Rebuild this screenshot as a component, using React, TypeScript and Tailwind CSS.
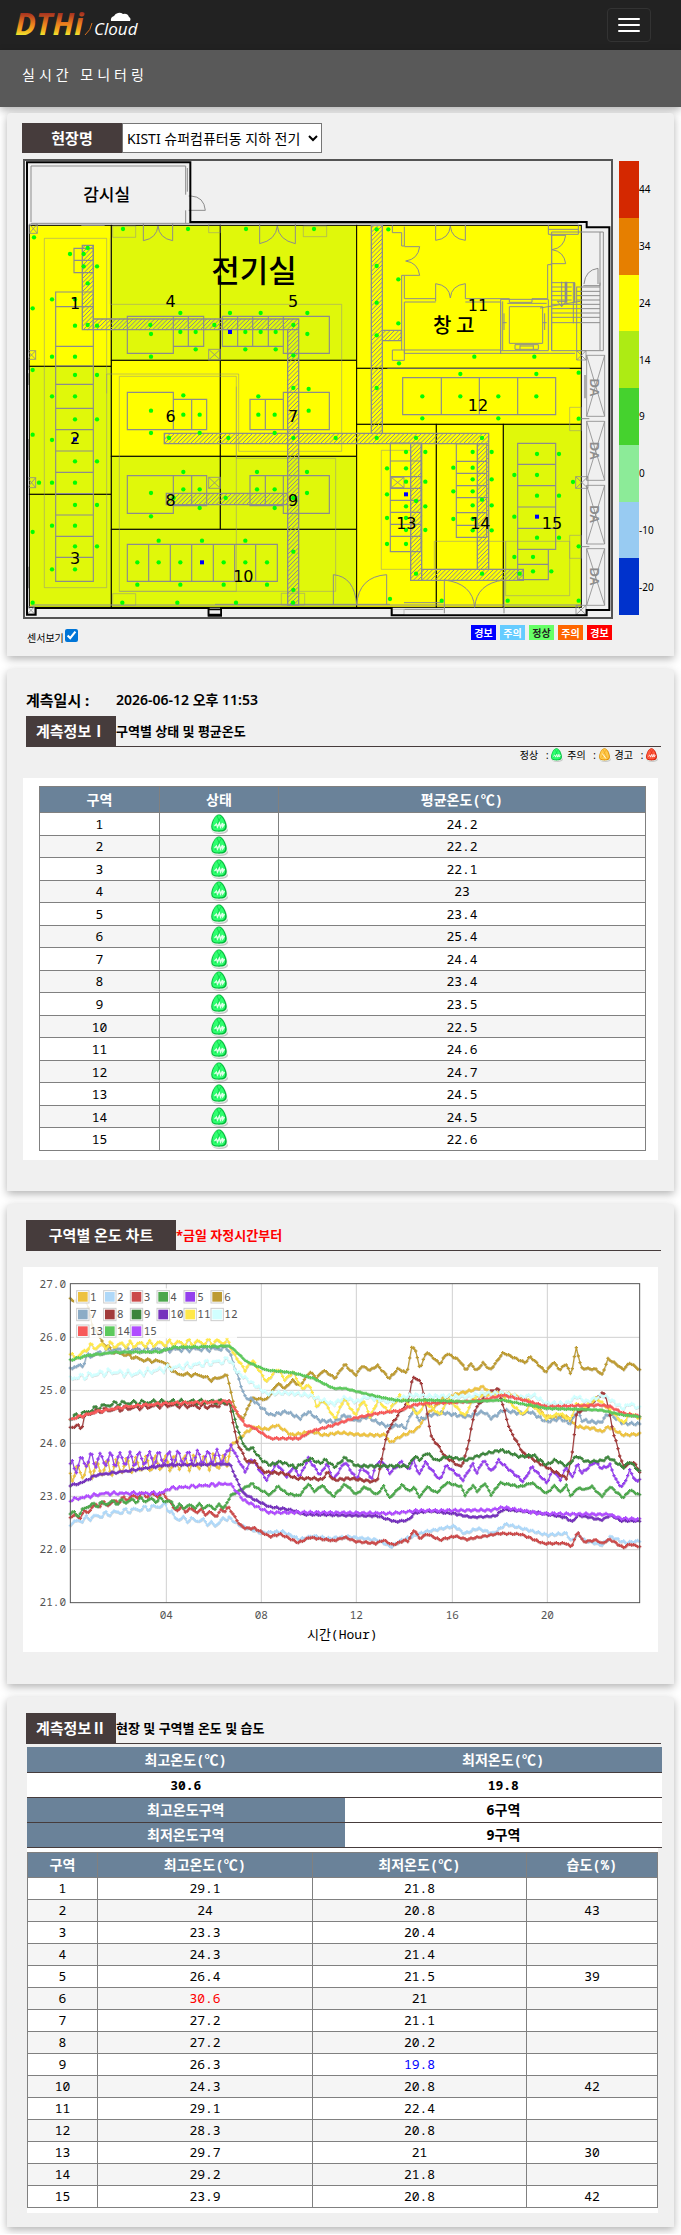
import React from "react";

const SANS = "font-['Noto_Sans','Noto_Sans_CJK_KR',sans-serif]";
const MONO = "font-['Noto_Sans_Mono','Noto_Sans_CJK_KR',monospace]";

type Box = [number, number, number, number];
type Pt = [number, number];

/* ---------- data ---------- */

const ZONES: { id: number; avg: string; max: string; min: string; hum: string }[] = [
  { id: 1, avg: "24.2", max: "29.1", min: "21.8", hum: "" },
  { id: 2, avg: "22.2", max: "24", min: "20.8", hum: "43" },
  { id: 3, avg: "22.1", max: "23.3", min: "20.4", hum: "" },
  { id: 4, avg: "23", max: "24.3", min: "21.4", hum: "" },
  { id: 5, avg: "23.4", max: "26.4", min: "21.5", hum: "39" },
  { id: 6, avg: "25.4", max: "30.6", min: "21", hum: "" },
  { id: 7, avg: "24.4", max: "27.2", min: "21.1", hum: "" },
  { id: 8, avg: "23.4", max: "27.2", min: "20.2", hum: "" },
  { id: 9, avg: "23.5", max: "26.3", min: "19.8", hum: "" },
  { id: 10, avg: "22.5", max: "24.3", min: "20.8", hum: "42" },
  { id: 11, avg: "24.6", max: "29.1", min: "22.4", hum: "" },
  { id: 12, avg: "24.7", max: "28.3", min: "20.8", hum: "" },
  { id: 13, avg: "24.5", max: "29.7", min: "21", hum: "30" },
  { id: 14, avg: "24.5", max: "29.2", min: "21.8", hum: "" },
  { id: 15, avg: "22.6", max: "23.9", min: "20.8", hum: "42" },
];

const SCALE = [
  { label: "44", cls: "bg-[#d42800]" },
  { label: "34", cls: "bg-[#e67f00]" },
  { label: "24", cls: "bg-[#ffff00]" },
  { label: "14", cls: "bg-[#adeb14]" },
  { label: "9", cls: "bg-[#45d22e]" },
  { label: "0", cls: "bg-[#8ceb98]" },
  { label: "-10", cls: "bg-[#98cbf2]" },
  { label: "-20", cls: "bg-[#0032cc]" },
];

const BADGES = [
  { label: "경보", cls: "bg-[#0000ff] text-white" },
  { label: "주의", cls: "bg-[#66ccff] text-white" },
  { label: "정상", cls: "bg-[#66ff66] text-[#222]" },
  { label: "주의", cls: "bg-[#ff6600] text-white" },
  { label: "경보", cls: "bg-[#ff0000] text-white" },
];

/* ---------- floor plan ---------- */

const YELLOW = "#ffff00";
const LIME = "#e0f80a";

const ROOMS: { b: Box; c: string }[] = [
  { b: [88, 256, 334, 679], c: YELLOW },
  { b: [88, 679, 334, 1063], c: LIME },
  { b: [88, 1063, 334, 1402], c: LIME },
  { b: [334, 256, 661, 661], c: LIME },
  { b: [661, 256, 1070, 661], c: LIME },
  { b: [334, 661, 661, 949], c: YELLOW },
  { b: [661, 661, 1070, 949], c: YELLOW },
  { b: [334, 949, 661, 1168], c: LIME },
  { b: [661, 949, 1070, 1168], c: LIME },
  { b: [334, 1168, 1070, 1402], c: LIME },
  { b: [1070, 256, 1744, 685], c: YELLOW },
  { b: [1070, 685, 1744, 853], c: YELLOW },
  { b: [1070, 853, 1309, 1402], c: YELLOW },
  { b: [1309, 853, 1510, 1402], c: YELLOW },
  { b: [1510, 853, 1744, 1402], c: LIME },
];

const CABINETS: Box[] = [
  [222, 325, 280, 361], [222, 361, 280, 398], [167, 456, 280, 500], [167, 500, 280, 619],
  [167, 619, 280, 678], [167, 678, 280, 733], [167, 733, 280, 805], [167, 805, 280, 869],
  [167, 869, 280, 933], [167, 933, 280, 997], [167, 997, 280, 1061], [167, 1061, 280, 1125],
  [167, 1125, 280, 1189], [167, 1189, 280, 1252], [167, 1252, 280, 1324],
  [382, 529, 520, 640], [520, 529, 565, 619], [565, 529, 611, 619], [667, 529, 713, 619],
  [713, 529, 758, 619], [758, 529, 805, 619], [805, 529, 850, 619], [850, 529, 988, 640],
  [382, 757, 520, 869], [520, 778, 575, 869], [575, 778, 620, 869], [750, 778, 796, 869],
  [796, 778, 850, 869], [850, 757, 988, 869],
  [382, 1007, 520, 1120], [520, 1007, 575, 1097], [575, 1007, 620, 1097], [750, 1007, 796, 1097],
  [796, 1007, 850, 1097], [850, 1007, 988, 1120],
  [382, 1213, 446, 1324], [446, 1213, 511, 1324], [511, 1213, 575, 1324], [575, 1213, 640, 1324],
  [640, 1213, 704, 1324], [704, 1213, 767, 1324], [767, 1213, 832, 1324],
  [1208, 713, 1324, 824], [1324, 713, 1438, 824], [1438, 713, 1553, 824], [1553, 713, 1667, 824],
  [1171, 909, 1263, 963], [1171, 963, 1263, 1010], [1171, 1010, 1263, 1045], [1171, 1045, 1263, 1081],
  [1171, 1081, 1263, 1117], [1171, 1117, 1263, 1153], [1171, 1153, 1263, 1189], [1171, 1189, 1263, 1235],
  [1369, 911, 1460, 964], [1369, 964, 1460, 1000], [1369, 1000, 1460, 1037], [1369, 1037, 1460, 1073],
  [1369, 1073, 1460, 1118], [1369, 1118, 1460, 1156], [1369, 1156, 1460, 1192],
  [1553, 910, 1667, 973], [1553, 973, 1667, 1037], [1553, 1037, 1667, 1101], [1553, 1101, 1667, 1165],
  [1553, 1165, 1667, 1228], [1553, 1228, 1645, 1273], [1553, 1273, 1645, 1319],
];

const THIN_BOXES: Box[] = [
  [133, 295, 320, 1343], [338, 258, 407, 292], [910, 258, 980, 290], [626, 252, 661, 278],
  [358, 709, 709, 1354], [338, 1361, 407, 1396], [844, 1360, 914, 1395],
  [1162, 685, 1709, 685], [1144, 931, 1232, 1288], [1303, 1204, 1517, 1288], [1517, 1204, 1709, 1367],
  [1709, 802, 1744, 872], [1709, 1186, 1744, 1255], [1177, 1408, 1212, 1424],
];

const CROSSES: Box[] = [
  [88, 252, 112, 280], [82, 632, 107, 658], [82, 1013, 107, 1043], [82, 1400, 104, 1422],
  [626, 628, 661, 660], [626, 1012, 661, 1045], [1174, 1012, 1212, 1043], [1727, 1010, 1764, 1045],
  [1730, 632, 1758, 660], [1728, 1396, 1758, 1424],
];

const DUCTS: Box[] = [
  [247, 316, 280, 569], [280, 537, 896, 569], [863, 569, 896, 1395], [493, 880, 1466, 911],
  [1114, 256, 1147, 880], [1147, 571, 1204, 602], [499, 1060, 863, 1094],
  [1232, 911, 1265, 1321], [1432, 911, 1466, 1288], [1265, 1288, 1570, 1321],
];

const SHAFTS: Box[] = [
  [1760, 646, 1814, 829], [1760, 844, 1814, 1021], [1760, 1036, 1814, 1212], [1760, 1226, 1814, 1396],
];

const SENSORS: Pt[] = [
  [369, 267], [564, 267], [738, 267], [942, 267], [102, 292], [263, 324], [251, 342], [210, 342],
  [251, 379], [291, 379], [263, 430], [156, 478], [225, 478], [98, 505], [225, 557], [263, 555], [291, 557],
  [156, 650], [225, 650], [98, 690], [225, 705], [291, 705], [156, 769], [225, 769],
  [541, 519], [690, 519], [782, 519], [922, 519], [451, 555], [643, 555], [880, 555],
  [453, 582], [541, 576], [587, 576], [736, 576], [782, 576], [827, 576], [922, 582],
  [587, 628], [736, 628], [827, 628], [453, 650], [880, 646], [880, 744], [926, 747], [550, 766], [775, 769],
  [1130, 268], [1165, 268], [1130, 378], [1195, 418], [1130, 488], [1195, 550], [1130, 586], [1197, 670],
  [1423, 650], [1603, 650], [1381, 702], [1609, 702], [1736, 698], [1130, 744], [1267, 769], [1381, 769],
  [1495, 769], [1609, 769],
  [225, 838], [291, 838], [98, 884], [156, 900], [225, 964], [291, 964], [117, 1028], [156, 1028], [225, 1028],
  [225, 1095], [291, 1095], [156, 1157], [225, 1157], [98, 1176], [225, 1219], [291, 1219], [156, 1288],
  [225, 1288], [98, 1388], [367, 1388], [532, 1388], [708, 1388], [879, 1388],
  [453, 812], [550, 824], [599, 824], [775, 824], [824, 824], [926, 812], [453, 879], [599, 879], [824, 879],
  [507, 894], [685, 894], [880, 894], [1007, 894], [550, 996], [771, 996], [921, 996],
  [550, 1048], [599, 1048], [771, 1048], [824, 1048], [453, 1059], [921, 1059], [521, 1074], [677, 1074], [880, 1074],
  [599, 1104], [824, 1104], [453, 1129], [476, 1202], [606, 1202], [736, 1202], [880, 1235],
  [412, 1267], [476, 1267], [541, 1267], [671, 1267], [736, 1267], [801, 1267],
  [412, 1334], [541, 1334], [671, 1334], [801, 1334], [880, 1350],
  [1267, 835], [1495, 835], [1736, 836], [1130, 894], [1248, 894], [1446, 894],
  [1218, 936], [1276, 936], [1161, 985], [1218, 985], [1218, 1025], [1276, 1025], [1161, 1063], [1248, 1083],
  [1218, 1099], [1276, 1099], [1161, 1134], [1218, 1134], [1218, 1170], [1276, 1170], [1161, 1212], [1218, 1212],
  [1418, 936], [1475, 936], [1360, 983], [1418, 983], [1418, 1018], [1475, 1018], [1360, 1054], [1418, 1054],
  [1446, 1079], [1418, 1096], [1475, 1096], [1360, 1137], [1418, 1137], [1418, 1171], [1475, 1171],
  [1611, 942], [1677, 942], [1543, 1005], [1611, 1005], [1719, 1026], [1611, 1067], [1677, 1067], [1543, 1130],
  [1611, 1193], [1677, 1193], [1736, 1219], [1543, 1251], [1599, 1251], [1599, 1294], [1654, 1294],
  [1248, 1301], [1446, 1301], [1559, 1301], [1170, 1377], [1325, 1382], [1523, 1382], [1736, 1382],
];

const HUMIDITY: Pt[] = [[690, 576], [225, 898], [606, 1267], [1218, 1063], [1611, 1130]];

const NUMBERS: { n: number; p: Pt }[] = [
  { n: 1, p: [225, 507] }, { n: 4, p: [512, 500] }, { n: 5, p: [879, 500] }, { n: 2, p: [225, 912] },
  { n: 3, p: [225, 1271] }, { n: 6, p: [512, 846] }, { n: 7, p: [879, 846] }, { n: 8, p: [512, 1098] },
  { n: 9, p: [879, 1098] }, { n: 10, p: [730, 1325] }, { n: 11, p: [1434, 514] }, { n: 12, p: [1434, 812] },
  { n: 13, p: [1219, 1167] }, { n: 14, p: [1441, 1167] }, { n: 15, p: [1656, 1167] },
];

function boxPath(list: Box[]) {
  return list.map(([a, b, c, d]) => `M${a} ${b}H${c}V${d}H${a}Z`).join("");
}
function crossPath(list: Box[]) {
  return list.map(([a, b, c, d]) => `M${a} ${b}L${c} ${d}M${c} ${b}L${a} ${d}`).join("");
}

// 45 degree hatch lines, clipped to each box.
function hatchPath(list: Box[]) {
  const step = 13;
  let d = "";
  for (const [x0, y0, x1, y1] of list) {
    const start = Math.ceil((x0 + y0) / step) * step;
    for (let s = start; s < x1 + y1; s += step) {
      const ax = Math.max(x0, s - y1);
      const bx = Math.min(x1, s - y0);
      d += `M${ax} ${s - ax}L${bx} ${s - bx}`;
    }
  }
  return d;
}

function FloorPlan() {
  return (
    <svg viewBox="75 63 1758 1368" className="block w-full" role="img" aria-label="전기실 평면도">
      {ROOMS.map(({ b, c }, i) => (
        <rect key={i} x={b[0]} y={b[1]} width={b[2] - b[0]} height={b[3] - b[1]} fill={c} stroke="#000" strokeWidth="3" />
      ))}
      <g fill="none" stroke="#8c8c8c">
        <path d={boxPath(THIN_BOXES)} strokeWidth="2" opacity="0.75" />
        <path
          d="M331 295V493H1025V934H716V702H320V760M709 740V955H1007V1354H358"
          strokeWidth="2.5"
          opacity="0.6"
        />
        <path d={boxPath(CABINETS)} strokeWidth="3.5" />
        <path d={boxPath(CROSSES) + crossPath(CROSSES)} strokeWidth="2.5" />
        <path d={boxPath(SHAFTS) + crossPath(SHAFTS)} strokeWidth="2.5" />
        <path d={hatchPath(DUCTS)} strokeWidth="3" />
        <path d={boxPath(DUCTS)} strokeWidth="4" />
        <path
          strokeWidth="3"
          d="M93 246V78H557V164M562 84V155M557 211V250M566 168H573M573 168Q612 170 616 211H566M93 250H1735M244 256H314
             M430 250V302Q470 295 474 258Q478 295 518 302V250
             M779 250V311Q828 300 832 258Q836 300 886 311V250
             M1307 254V301Q1348 296 1351 258Q1354 296 1396 301V254
             M1213 320H1259Q1254 358 1217 363Q1254 368 1259 406H1213
             M1307 484V431Q1348 436 1351 474Q1354 436 1396 431V476
             M1652 286H1697Q1692 324 1656 329Q1692 334 1697 371H1652
             M1177 256V278H1205V318H1213V260M1213 406H1205V630M1213 406V476H1307M1396 476H1528V487H1596V476H1643V374H1655V286M1645 256V283H1735V256M1645 268H1735
             M1213 486H1307M1396 486H1502V642M1213 486V640H1725M1213 630H1502M1177 630H1213V661H1177Z
             M1655 276H1810V632H1655ZM1800 276V630M1730 440V632M1655 374V632
             M1502 478H1645V632H1502ZM1528 500H1628V610H1528ZM1508 484V630M1522 490H1640M1512 520V570M1634 520V570M1508 548H1520M1628 548H1640
             M1545 614H1615V628H1545ZM1560 616V628M1600 616V628M1560 618H1600
             M1655 428H1725M1655 441H1715M1655 454H1715M1655 467H1715M1655 480H1715M1655 493H1800M1655 506H1800M1655 519H1800M1655 532H1800M1655 548H1800
             M1730 441H1800M1730 454H1800M1730 467H1800M1730 480H1800M1720 428V550M1685 425V500M1685 500L1672 484H1698ZM1620 504L1740 484
             M1752 432Q1756 390 1794 385V432M1750 437H1800V428"
        />
        <path
          strokeWidth="3"
          d="M1000 1395V1304Q1064 1310 1070 1395Q1076 1310 1160 1304V1395M1333 1420V1320Q1418 1330 1424 1402Q1430 1330 1512 1320V1420M95 1395H1744M645 1393H1170M1212 1388H1330M1213 1408H1330M1744 836H1768M1744 1220H1768"
        />
        <path strokeWidth="4" d="M1696 425V488M1700 425V488M1724 428V488M85 655V690M85 700V735M85 897V960M85 1280V1345M1755 705V775" />
      </g>
      <path
        d="M81 67H571V246H1760V262H1828V1410H1760V1426H1175V1404H663V1427H626V1404H107V1424H81Z"
        fill="none"
        stroke="#000"
        strokeWidth="6"
      />
      <path d="M626 1408H663V1424H626Z" fill="#f0f0f0" stroke="#000" strokeWidth="5" />
      <g fill="#8d8d8d" className="font-['Liberation_Sans',sans-serif] font-bold" fontSize="37" textAnchor="middle">
        {[743, 933, 1123, 1310].map((y) => (
          <text key={y} transform={`translate(1771 ${y}) rotate(90)`}>DA</text>
        ))}
      </g>
      <g className="font-['Noto_Sans_CJK_KR',sans-serif] font-medium" textAnchor="middle">
        <text x="320" y="182" fontSize="51">감시실</text>
        <text x="762" y="427" fontSize="93">전기실</text>
        <text x="1361" y="579" fontSize="60">창 고</text>
      </g>
      {SENSORS.map(([x, y], i) => (
        <circle key={i} cx={x} cy={y} r="6.5" fill="#00ff00" />
      ))}
      {HUMIDITY.map(([x, y], i) => (
        <rect key={i} x={x - 6} y={y - 6} width="12" height="12" fill="#0000ff" />
      ))}
      <g className="font-['DejaVu_Sans',sans-serif]" fontSize="48" textAnchor="middle">
        {NUMBERS.map(({ n, p }) => (
          <text key={n} x={p[0]} y={p[1]}>{n}</text>
        ))}
      </g>
    </svg>
  );
}

/* ---------- temperature chart ---------- */

type Series = { color: string; noise: number; pts: string };

const SERIES: Series[] = [
  { color: "#edc240", noise: 3, pts: "211,640 300,625 450,610 685,605 690,560 740,515 765,500 800,508 830,495 875,525 940,515 970,525 1020,518 1090,525 1160,525 1168,548 1200,530 1250,508 1290,455 1330,415 1370,402 1400,395 1450,380 1470,398 1520,400 1560,410 1600,430 1640,470 1700,470 1730,500 1780,505 1805,515 1825,500 1870,525 1919,522" },
  { color: "#afd8f8", noise: 3, pts: "211,790 261,775 339,758 456,742 495,735 528,775 606,782 645,795 684,770 717,795 782,818 847,815 899,838 938,828 990,835 1042,830 1134,840 1173,860 1205,840 1277,815 1362,798 1394,820 1433,805 1479,820 1518,792 1577,808 1642,825 1700,820 1713,845 1733,820 1752,840 1805,855 1831,830 1876,848 1919,843" },
  { color: "#cb4b4b", noise: 2, pts: "211,770 240,768 290,735 330,730 380,715 430,705 497,705 520,745 590,752 650,765 685,740 720,795 735,805 765,805 810,830 840,822 895,848 930,832 1000,842 1035,832 1070,845 1130,850 1150,840 1178,855 1215,840 1222,845 1243,808 1258,835 1282,822 1320,840 1365,828 1400,838 1500,820 1560,822 1630,850 1700,850 1713,862 1733,815 1750,845 1790,840 1805,850 1830,838 1870,863 1890,852 1919,860" },
  { color: "#4da74d", noise: 2, pts: "211,760 240,762 260,738 330,728 420,720 497,720 530,740 600,738 650,742 680,735 690,708 757,670 765,680 810,705 833,678 860,700 898,708 925,672 945,695 965,675 1000,710 1035,672 1068,703 1095,680 1130,705 1152,678 1168,715 1205,675 1230,695 1240,680 1260,712 1280,680 1310,698 1340,668 1385,680 1395,705 1420,675 1430,695 1455,670 1473,705 1500,668 1560,680 1595,668 1640,700 1665,675 1680,698 1698,675 1713,710 1730,685 1760,688 1775,678 1805,710 1830,680 1870,713 1890,690 1919,705" },
  { color: "#9440ed", noise: 3, pts: "211,625 260,600 685,590 690,550 710,590 735,635 755,595 800,660 830,610 860,650 880,620 900,650 925,595 960,645 980,610 1000,660 1035,605 1070,658 1085,620 1115,655 1130,610 1150,605 1168,640 1205,605 1225,630 1240,600 1258,645 1275,605 1320,660 1338,615 1390,660 1418,610 1430,640 1450,600 1475,635 1495,600 1570,665 1595,620 1640,668 1660,630 1680,660 1700,620 1715,655 1732,610 1745,640 1785,605 1805,625 1830,615 1850,665 1868,682 1890,630 1910,668 1919,655" },
  { color: "#bd9b33", noise: 2, pts: "211,120 258,120 275,190 310,250 340,275 380,285 430,300 490,305 530,342 600,345 635,360 680,345 690,380 700,430 715,470 730,475 755,415 800,418 833,370 855,385 877,360 900,378 930,335 950,355 970,330 1005,355 1035,312 1050,330 1068,345 1085,318 1110,330 1133,316 1168,355 1195,325 1220,340 1235,262 1244,262 1260,325 1280,275 1320,312 1340,280 1380,302 1397,330 1415,310 1428,333 1450,308 1470,330 1510,278 1575,308 1590,290 1638,336 1660,305 1680,330 1697,310 1713,345 1728,262 1745,325 1790,328 1805,346 1824,296 1870,328 1890,308 1919,330" },
  { color: "#8cacc6", noise: 4, pts: "211,322 245,318 260,290 330,270 500,268 685,265 700,310 735,412 760,420 810,465 860,455 900,475 925,455 960,482 1005,485 1035,465 1070,483 1100,470 1130,485 1168,500 1200,495 1215,505 1240,445 1258,480 1290,465 1330,458 1400,470 1450,455 1475,475 1510,450 1560,460 1590,455 1640,485 1680,475 1710,490 1733,450 1745,480 1800,488 1826,460 1870,490 1919,492" },
  { color: "#a23c3c", noise: 3, pts: "211,500 245,500 255,465 290,452 500,435 640,440 688,425 698,480 710,545 740,605 765,605 790,635 850,640 890,655 945,655 965,660 982,635 1000,660 1050,655 1120,665 1135,655 1150,570 1165,510 1200,455 1222,430 1235,365 1243,350 1265,370 1280,450 1295,535 1310,550 1335,590 1380,620 1392,605 1405,550 1425,450 1460,400 1495,385 1510,440 1530,510 1570,580 1620,610 1700,655 1715,590 1730,455 1755,450 1790,415 1805,400 1817,405 1840,520 1870,620 1900,605 1919,635" },
  { color: "#3d853d", noise: 3, pts: "211,475 250,460 300,440 350,430 500,425 690,425 700,460 720,530 740,570 755,562 785,600 810,615 840,605 890,622 930,595 960,610 975,598 1005,622 1035,592 1070,618 1130,618 1225,618 1243,588 1260,600 1280,578 1310,602 1340,590 1400,600 1450,582 1505,570 1560,590 1600,585 1640,615 1665,600 1700,618 1730,588 1760,605 1805,602 1825,592 1870,622 1890,605 1919,635" },
  { color: "#7633bd", noise: 2, pts: "211,676 240,670 290,645 400,630 500,615 690,612 715,670 730,700 756,715 808,740 873,750 912,763 1134,768 1186,785 1225,780 1244,758 1290,753 1355,760 1420,772 1485,768 1511,748 1616,758 1694,772 1717,785 1733,765 1805,780 1831,765 1863,782 1919,783" },
  { color: "#ffe84a", noise: 3, pts: "211,290 245,285 260,262 340,255 500,250 685,245 700,280 735,330 757,300 800,365 833,325 855,360 880,335 905,385 930,375 950,440 970,420 1005,478 1033,415 1065,465 1090,420 1110,470 1135,420 1165,455 1200,405 1240,450 1255,465 1275,425 1320,465 1345,415 1395,468 1420,415 1445,405 1500,400 1570,465 1590,430 1640,475 1680,460 1710,480 1730,430 1755,440 1790,415 1830,450 1870,490 1890,460 1919,475" },
  { color: "#d1ffff", noise: 5, pts: "211,355 330,335 400,342 500,325 600,312 690,300 710,335 760,372 800,400 860,398 925,405 1000,432 1035,412 1068,425 1100,410 1168,425 1235,405 1280,408 1400,410 1450,400 1510,400 1560,412 1600,405 1640,430 1700,430 1730,408 1760,425 1810,405 1870,445 1890,430 1919,445" },
  { color: "#f75a5a", noise: 2, pts: "211,478 290,455 380,440 500,430 690,425 710,455 735,495 760,502 810,535 900,535 930,515 1000,495 1060,475 1130,460 1200,452 1240,435 1280,430 1400,425 1450,420 1510,405 1570,420 1640,440 1800,435 1830,440 1870,460 1919,468" },
  { color: "#5cc95c", noise: 1, pts: "211,300 260,287 340,277 480,275 520,262 690,258 740,305 800,330 880,338 940,355 1000,385 1035,385 1100,402 1160,415 1200,422 1280,420 1400,425 1510,420 1560,430 1640,445 1800,450 1870,465 1919,470" },
  { color: "#b04dff", noise: 3, pts: "211,720 313,700 482,700 508,685 690,670 730,720 808,758 912,757 1173,760 1251,752 1472,750 1511,742 1616,760 1707,762 1824,763 1863,775 1919,778" },
];

const RIPPLE = [22, 6, 6, 6, 20, 3, 5, 5, 5, 1, 8, 6, 2, 1, 2];

function samples(s: Series, idx: number): Pt[] {
  const keys = s.pts.split(" ").map((p) => p.split(",").map(Number) as Pt);
  const out: Pt[] = [];
  let k = 0;
  for (let i = 0; i <= 287; i++) {
    const x = 211 + (i * 1708) / 287;
    while (k < keys.length - 2 && keys[k + 1][0] < x) k++;
    const [x0, y0] = keys[k];
    const [x1, y1] = keys[k + 1];
    const t = (x - x0) / (x1 - x0);
    const ripple = x < 685 ? Math.sin((i * 2 * Math.PI) / 4.9 + idx) * RIPPLE[idx] : 0;
    const jitter = Math.sin(i * 1.9 + idx * 2.3) * s.noise;
    out.push([Math.round(x), Math.round(y0 + (y1 - y0) * t + ripple + jitter)]);
  }
  return out;
}

function TemperatureChart() {
  const hLines = [232, 391, 550, 709, 869];
  const yLabels = ["27.0", "26.0", "25.0", "24.0", "23.0", "22.0", "21.0"];
  const vLines = [499, 784, 1069, 1357, 1642];
  const xLabels = ["04", "08", "12", "16", "20"];
  const colX = [229, 310, 390, 470, 551, 632];
  const rowY = [91, 144, 194];
  return (
    <svg viewBox="69 21 1905 1155" className={`block w-full bg-white ${MONO}`} role="img" aria-label="구역별 온도 차트">
      <g stroke="#d0d0d0" strokeWidth="3">
        {hLines.map((y) => <line key={y} x1="211" x2="1919" y1={y} y2={y} />)}
        {vLines.map((x) => <line key={x} x1={x} x2={x} y1="71" y2="1028" />)}
      </g>
      {SERIES.map((s, i) => {
        const pts = samples(s, i);
        return (
          <g key={i} fill="none">
            <polyline points={pts.map(([x, y]) => `${x + 1},${y + 4}`).join(" ")} stroke="#000" strokeOpacity="0.15" strokeWidth="4" />
            <polyline points={pts.map((p) => p.join(",")).join(" ")} stroke={s.color} strokeWidth="3.5" />
            <path d={pts.map(([x, y]) => `M${x - 5} ${y}h10M${x} ${y - 5}v10`).join("")} stroke={s.color} strokeWidth="4" />
          </g>
        );
      })}
      <rect x="211" y="71" width="1708" height="957" fill="none" stroke="#545454" strokeWidth="3" />
      <rect x="222" y="85" width="489" height="150" fill="#fff" fillOpacity="0.85" />
      <g fill="#545454" fontSize="33">
        {SERIES.map((s, i) => {
          const x = colX[i % 6];
          const y = rowY[Math.floor(i / 6)];
          return (
            <g key={i}>
              <rect x={x + 1} y={y + 1} width="37" height="37" fill="#fff" stroke="#ccc" strokeWidth="3" />
              <rect x={x + 5} y={y + 5} width="29" height="29" fill={s.color} />
              <text x={x + 41} y={y + 31}>{i + 1}</text>
            </g>
          );
        })}
        {yLabels.map((t, i) => (
          <text key={t} x="198" y={84 + i * 159} textAnchor="end">{t}</text>
        ))}
        {xLabels.map((t, i) => (
          <text key={t} x={vLines[i]} y="1077" textAnchor="middle">{t}</text>
        ))}
      </g>
      <text x="1027" y="1138" fontSize="39" textAnchor="middle">시간(Hour)</text>
    </svg>
  );
}

/* ---------- small pieces ---------- */

type Tone = "safe" | "warn" | "alarm";
const TONES: Record<Tone, { light: string; dark: string; word: string }> = {
  safe: { light: "#2dff6e", dark: "#00b83a", word: "M4.500 12l2-2 1 3 2-4 1 4 2-4v4l2-3" },
  warn: { light: "#ffc94a", dark: "#e08a00", word: "M6 8l5 7" },
  alarm: { light: "#ff5a3c", dark: "#d01000", word: "M4.500 12l2-2 1 3 2-4 1 4 2-4v4l2-3" },
};

function StatusIcon({ tone, className }: { tone: Tone; className: string }) {
  const c = TONES[tone];
  return (
    <svg viewBox="0 0 18 20" className={className} role="img" aria-label={tone}>
      <ellipse cx="10" cy="16.500" rx="8" ry="3.400" fill="#c6c6c6" />
      <path d="M9 0C4.500 0 .5 8 .5 13S3.500 18.800 9 18.800 17.500 17.500 17.500 13 13.500 0 9 0Z" fill="#e3f1e6" />
      <path d="M9 .4C5 .4 1.300 8 1.300 12.600S4.500 17.700 9 17.700s7.700-.7 7.700-5.100S13 .4 9 .4Z" fill={c.dark} />
      <path d="M8.700 1.200C5.200 1.200 2.300 8 2.300 12.200s2.700 4.300 6.400 4.300 6.500-.6 6.500-4.400S12.200 1.200 8.700 1.200Z" fill={c.light} />
      <path d="M7 2l6 13M11 3L5 14" stroke={c.dark} strokeWidth="1" opacity="0.55" />
      <path d={c.word} fill="none" stroke="#fff" strokeWidth="1.400" opacity="0.85" />
    </svg>
  );
}

function Logo() {
  return (
    <svg viewBox="0 -6 132 44" className="h-[44px] w-[132px]" role="img" aria-label="DTHi Cloud">
      <defs>
        <linearGradient id="fire" gradientUnits="userSpaceOnUse" x1="0" x2="0" y1="3" y2="28">
          <stop offset="0" stopColor="#9e2a20" />
          <stop offset="0.45" stopColor="#e87a1e" />
          <stop offset="0.75" stopColor="#f5b21e" />
          <stop offset="1" stopColor="#e8ff3a" />
        </linearGradient>
      </defs>
      <text x="0" y="26" fontSize="31" fill="url(#fire)" className="font-['Open_Sans','Noto_Sans',sans-serif] font-bold italic">DTHi</text>
      <path d="M70 26Q76 21 77 14" fill="none" stroke="#d8701e" strokeWidth="1" />
      <text x="79" y="26" fontSize="17" fill="#fff" className="font-['Open_Sans','Noto_Sans',sans-serif] italic">Cloud</text>
      <path d="M96 12a4 4 0 0 1 3-5 6 6 0 0 1 9-2 5 5 0 0 1 6 3 3 3 0 0 1 1 4H96Z" fill="#fff" />
    </svg>
  );
}

function Celsius({ label }: { label: string }) {
  return (
    <>
      {label}(<span className="font-['Noto_Sans_CJK_KR',sans-serif]">℃</span>)
    </>
  );
}

function Card({ className, children }: { className: string; children: React.ReactNode }) {
  return (
    <section className={`mx-[7px] rounded-t-[4px] bg-[#f0f0f0] shadow-[0_3px_8px_rgba(0,0,0,0.3)] ${className}`}>{children}</section>
  );
}

function TagTitle({ tag, note, wide, red }: { tag: string; note: string; wide?: boolean; red?: boolean }) {
  return (
    <div className="ml-[19px] mr-[13px] flex h-[31px] items-center border-b border-[#463c3c]">
      <h2
        className={`flex h-[30px] shrink-0 items-center bg-[#463c3c] text-[15px] font-bold text-white ${
          wide ? "w-[150px] justify-center" : "w-[90px] pl-[10px]"
        }`}
      >
        {tag}
      </h2>
      <span className={`text-[13px] font-bold ${red ? "text-[#ff0000]" : "text-black"}`}>{note}</span>
    </div>
  );
}

const TH = "border border-[#808080] bg-[#6a8299] p-0 text-center text-[14px] leading-[20px] font-bold text-white";
const TD = "border border-[#808080] p-0 text-center leading-[18px]";

/* ---------- page ---------- */

export default function App() {
  return (
    <div className={`bg-white pb-[7px] text-[13px] leading-[20px] text-black ${SANS}`}>
      <header>
        <nav className="flex h-[50px] items-center justify-between bg-[#222] pr-[30px] pl-[15px]">
          <a href="#" aria-label="DTHi Cloud"><Logo /></a>
          <button type="button" aria-label="메뉴" className="flex h-[34px] w-[44px] flex-col items-center justify-center gap-1 rounded border border-[#333]">
            <span className="h-0.5 w-[22px] rounded-[1px] bg-white" />
            <span className="h-0.5 w-[22px] rounded-[1px] bg-white" />
            <span className="h-0.5 w-[22px] rounded-[1px] bg-white" />
          </button>
        </nav>
        <div className="flex h-[57px] items-start bg-[#595959] px-[22px] pt-[15px] shadow-[0_3px_8px_rgba(0,0,0,0.3)]">
          <h1 className="text-[14px] tracking-[4px] text-white">실시간 모니터링</h1>
        </div>
      </header>

      <main className="mt-[6px] flex flex-col gap-[13px]">
        <Card className="h-[543px] pt-[10px] pl-4">
          <div className="-ml-px flex h-[30px]">
            <label htmlFor="site" className="flex w-[100px] items-center justify-center bg-[#463c3c] text-[15px] font-bold text-white">현장명</label>
            <select id="site" className="w-[200px] border border-[#767676] bg-white text-[14px] text-black">
              <option>KISTI 슈퍼컴퓨터동 지하 전기</option>
            </select>
          </div>
          <div className="mt-[6px] flex">
            <div className="min-w-0 flex-1 border-2 border-[#545454]"><FloorPlan /></div>
            <div className="mt-[2px] ml-[6px] mb-1 flex w-[55px] flex-col">
              {SCALE.map((s) => (
                <div key={s.label} className="flex flex-1 items-center">
                  <span className={`w-5 self-stretch ${s.cls}`} />
                  <span className="text-[10px]">{s.label}</span>
                </div>
              ))}
            </div>
          </div>
          <div className="mt-[6px] mr-[62px] flex items-start justify-between pl-1">
            <label className="mt-1 flex items-start text-[10px]">
              <span className="leading-[18px]">센서보기</span>
              <input type="checkbox" defaultChecked className="m-0 ml-px h-[13px] w-[13px] accent-[#0075d7]" />
            </label>
            <div className="flex gap-1">
              {BADGES.map((b, i) => (
                <span key={i} className={`flex h-[15px] w-[25px] items-center justify-center text-[10px] font-bold ${b.cls}`}>{b.label}</span>
              ))}
            </div>
          </div>
        </Card>

        <Card className="h-[522px] pt-[21px]">
          <div className="ml-[19px] flex h-[26px] items-start font-bold">
            <span className="w-[90px] text-[15px]">계측일시 :</span>
            <time className="text-[14px] font-semibold">2026-06-12 오후 11:53</time>
          </div>
          <TagTitle tag="계측정보Ⅰ" note="구역별 상태 및 평균온도" />
          <div className={`mr-4 flex h-[31px] items-start justify-end gap-1 text-[10px] leading-[16px] ${MONO}`}>
            <span className="flex items-center">정상 :<StatusIcon tone="safe" className="h-[14px] w-[13px]" /></span>
            <span className="flex items-center">주의 :<StatusIcon tone="warn" className="h-[14px] w-[13px]" /></span>
            <span className="flex items-center">경고 :<StatusIcon tone="alarm" className="h-[14px] w-[13px]" /></span>
          </div>
          <div className="mr-4 ml-4 bg-white pt-2 pr-3 pb-[9px] pl-4">
            <table className={`h-[365px] w-full table-fixed border-collapse ${MONO}`}>
              <colgroup><col className="w-[120px]" /><col className="w-[119px]" /><col /></colgroup>
              <thead>
                <tr className="h-[26px]"><th className={TH}>구역</th><th className={TH}>상태</th><th className={TH}><Celsius label="평균온도" /></th></tr>
              </thead>
              <tbody>
                {ZONES.map((z) => (
                  <tr key={z.id} className="odd:bg-white even:bg-[#f5f5f5]">
                    <td className={TD}>{z.id}</td>
                    <td className={TD}><StatusIcon tone="safe" className="mx-auto block h-5 w-[18px]" /></td>
                    <td className={TD}>{z.avg}</td>
                  </tr>
                ))}
              </tbody>
            </table>
          </div>
        </Card>

        <Card className="h-[480px] pt-4">
          <TagTitle tag="구역별 온도 차트" note="*금일 자정시간부터" wide red />
          <div className="mx-4 mt-4"><TemperatureChart /></div>
        </Card>

        <Card className="h-[530px] pt-4">
          <TagTitle tag="계측정보Ⅱ" note="현장 및 구역별 온도 및 습도" />
          <div className="mr-3 ml-5 pt-[3px]">
            <table className={`w-full table-fixed border-collapse text-[14px] leading-[20px] font-bold ${MONO}`}>
              <tbody className="text-center">
                <tr className="h-[25px] border-b border-[#463c3c] bg-[#6a8299] text-white">
                  <th><Celsius label="최고온도" /></th><th><Celsius label="최저온도" /></th>
                </tr>
                <tr className="h-[25px] border-b border-[#463c3c] bg-white text-[13px]">
                  <td>30.6</td><td>19.8</td>
                </tr>
                <tr className="h-[25px] border-b border-[#463c3c] bg-white">
                  <th className="bg-[#6a8299] text-white">최고온도구역</th><td>6구역</td>
                </tr>
                <tr className="h-[25px] border-b border-[#463c3c] bg-white">
                  <th className="bg-[#6a8299] text-white">최저온도구역</th><td>9구역</td>
                </tr>
              </tbody>
            </table>
          </div>
          <div className="mr-4 ml-5 bg-white pt-1 pb-[5px]">
            <table className={`w-full table-fixed border-collapse ${MONO}`}>
              <colgroup><col className="w-[70px]" /><col className="w-[215px]" /><col className="w-[214px]" /><col /></colgroup>
              <thead>
                <tr className="h-[25px]">
                  <th className={TH}>구역</th><th className={TH}><Celsius label="최고온도" /></th><th className={TH}><Celsius label="최저온도" /></th><th className={TH}>습도(%)</th>
                </tr>
              </thead>
              <tbody>
                {ZONES.map((z) => (
                  <tr key={z.id} className="h-[22px] odd:bg-white even:bg-[#f5f5f5]">
                    <td className={TD}>{z.id}</td>
                    <td className={`${TD} ${z.id === 6 ? "text-[#ff0000]" : ""}`}>{z.max}</td>
                    <td className={`${TD} ${z.id === 9 ? "text-[#0000ff]" : ""}`}>{z.min}</td>
                    <td className={TD}>{z.hum}</td>
                  </tr>
                ))}
              </tbody>
            </table>
          </div>
        </Card>
      </main>
    </div>
  );
}
